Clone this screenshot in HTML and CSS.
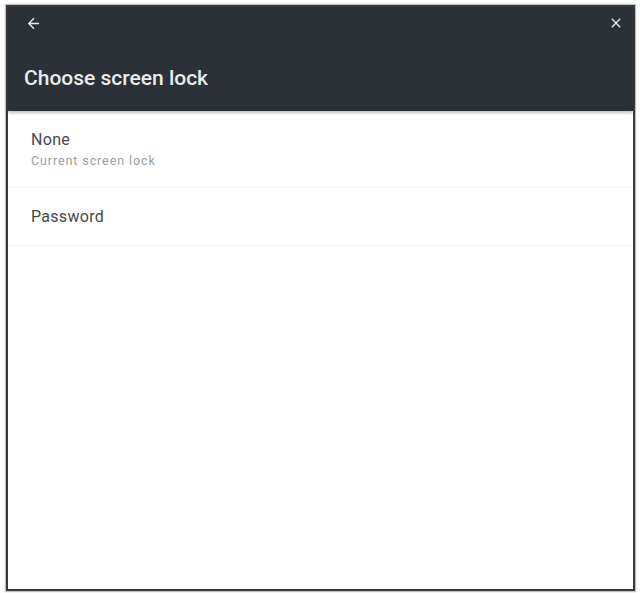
FILE: index.html
```html
<!DOCTYPE html>
<html lang="en">
<head>
<meta charset="utf-8">
<title>Choose screen lock</title>
<link rel="stylesheet" href="styles.css">
</head>
<body>
<div class="dialog">
  <header class="appbar">
    <div class="toolbar">
      <button class="icon-btn" aria-label="Back">
        <svg viewBox="0 0 24 24" width="17" height="17"><path d="M20 11H7.83l5.59-5.59L12 4l-8 8 8 8 1.41-1.41L7.83 13H20v-2z" fill="currentColor"/></svg>
      </button>
      <button class="icon-btn" aria-label="Close">
        <svg viewBox="0 0 24 24" width="16" height="16"><path d="M19 6.41L17.59 5 12 10.59 6.41 5 5 6.41 10.59 12 5 17.59 6.41 19 12 13.41 17.59 19 19 17.59 13.41 12z" fill="currentColor"/></svg>
      </button>
    </div>
    <h1 class="title">Choose screen lock</h1>
  </header>
  <ul class="options">
    <li class="option">
      <span class="option-title">None</span>
      <span class="option-sub">Current screen lock</span>
    </li>
    <li class="option">
      <span class="option-title">Password</span>
    </li>
  </ul>
</div>
</body>
</html>
```
FILE: styles.css
```css
html, body {
  margin: 0;
  padding: 0;
  background: #ffffff;
}

body {
  padding: 5px 5px 2px 6px;
  font-family: Roboto, "Noto Sans", sans-serif;
}

.dialog {
  height: 586px;
  border: 2px solid #3a3a3a;
  box-shadow: 0 0 1px 1px rgba(0, 0, 0, 0.25);
  background: #ffffff;
  display: flex;
  flex-direction: column;
  box-sizing: border-box;
}

.appbar {
  background: #2b3137;
  color: #eef0f0;
  height: 104px;
  box-sizing: border-box;
  display: flex;
  flex-direction: column;
  box-shadow: 0 2px 3px rgba(0, 0, 0, 0.25);
}

.toolbar {
  display: flex;
  justify-content: space-between;
  align-items: center;
  padding: 7px 8px 0 16px;
}

.icon-btn {
  background: none;
  border: 0;
  padding: 0;
  color: #e8ebec;
  width: 18px;
  height: 18px;
  display: flex;
  align-items: center;
  justify-content: center;
}

.title {
  margin: 34px 0 0 16px;
  font-size: 21px;
  font-weight: 500;
  letter-spacing: 0;
  color: #e9ecec;
}

.options {
  list-style: none;
  margin: 0;
  padding: 0;
}

.option {
  display: flex;
  flex-direction: column;
  padding: 19px 24px 19px 23px;
  border-bottom: 1px solid #f1f3f3;
}

.option + .option {
  padding-top: 19px;
  padding-bottom: 18px;
}

.option-title {
  font-size: 16px;
  letter-spacing: 0.3px;
  color: #45484b;
  line-height: 20px;
}

.option-sub {
  margin-top: 4px;
  font-size: 12.5px;
  letter-spacing: 0.9px;
  color: #9a9d9f;
  line-height: 14px;
}
```
